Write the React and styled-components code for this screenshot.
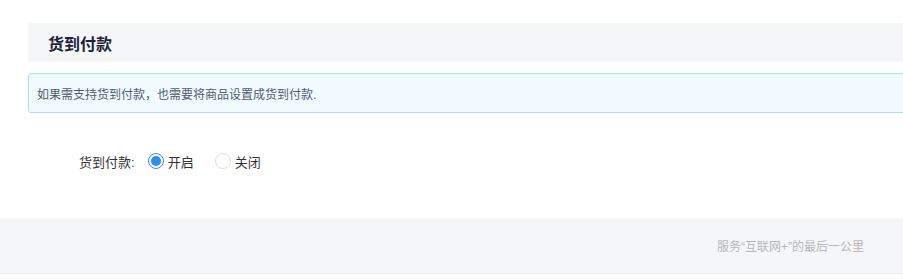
import React, { useState } from 'react';
import styled, { createGlobalStyle } from 'styled-components';

const GlobalStyle = createGlobalStyle`
  html, body {
    margin: 0;
    padding: 0;
    background: #fff;
    overflow: hidden;
    font-family: "Liberation Sans", "Noto Sans CJK SC", sans-serif;
  }
`;

const Page = styled.div`
  width: 903px;
  padding-top: 23px;
`;

const Content = styled.div`
  padding-left: 28px;
  margin-right: -40px;
`;

const SectionHeader = styled.div`
  height: 39px;
  display: flex;
  align-items: center;
  padding-left: 20px;
  background: #f5f6f8;
  border-radius: 2px;
  font-size: 16px;
  font-weight: bold;
  color: #1c2438;
`;

const Alert = styled.div`
  margin-top: 11px;
  height: 38px;
  display: flex;
  align-items: center;
  padding-left: 8px;
  background: #f0faff;
  border: 1px solid #abdcff;
  border-radius: 3px;
  font-size: 12px;
  color: #515a6e;
`;

const Form = styled.div`
  padding: 38px 0 47px 51px;
`;

const FormRow = styled.div`
  display: flex;
  align-items: center;
  height: 20px;
`;

const Label = styled.span`
  font-size: 13px;
  color: #333;
  margin-right: 13px;
`;

const RadioItem = styled.label`
  display: flex;
  align-items: center;
  margin-right: 21px;
  font-size: 13px;
  color: #333;
  cursor: pointer;
`;

const RadioCircle = styled.span`
  box-sizing: border-box;
  width: 16px;
  height: 16px;
  border-radius: 50%;
  border: 1px solid ${(p) => (p.checked ? '#2d8cf0' : '#dcdee2')};
  background: #fff;
  display: flex;
  align-items: center;
  justify-content: center;
  margin-right: 4px;

  &::after {
    content: '';
    width: 10px;
    height: 10px;
    border-radius: 50%;
    background: ${(p) => (p.checked ? '#2d8cf0' : 'transparent')};
  }
`;

const Footer = styled.div`
  height: 55px;
  display: flex;
  align-items: center;
  justify-content: flex-end;
  padding-right: 39px;
  background: #f5f6f8;
  border-bottom: 1px solid #e8eaec;
  font-size: 12px;
  color: #b5b7bb;
`;

const options = [
  { value: 1, label: '开启' },
  { value: 0, label: '关闭' },
];

const App = () => {
  const [cod, setCod] = useState(1);

  return (
    <Page>
      <GlobalStyle />
      <Content>
        <SectionHeader>货到付款</SectionHeader>
        <Alert>如果需支持货到付款，也需要将商品设置成货到付款.</Alert>
        <Form>
          <FormRow>
            <Label>货到付款:</Label>
            {options.map((o) => (
              <RadioItem key={o.value} onClick={() => setCod(o.value)}>
                <RadioCircle checked={cod === o.value} />
                {o.label}
              </RadioItem>
            ))}
          </FormRow>
        </Form>
      </Content>
      <Footer>服务“互联网+”的最后一公里</Footer>
    </Page>
  );
};

export default App;
